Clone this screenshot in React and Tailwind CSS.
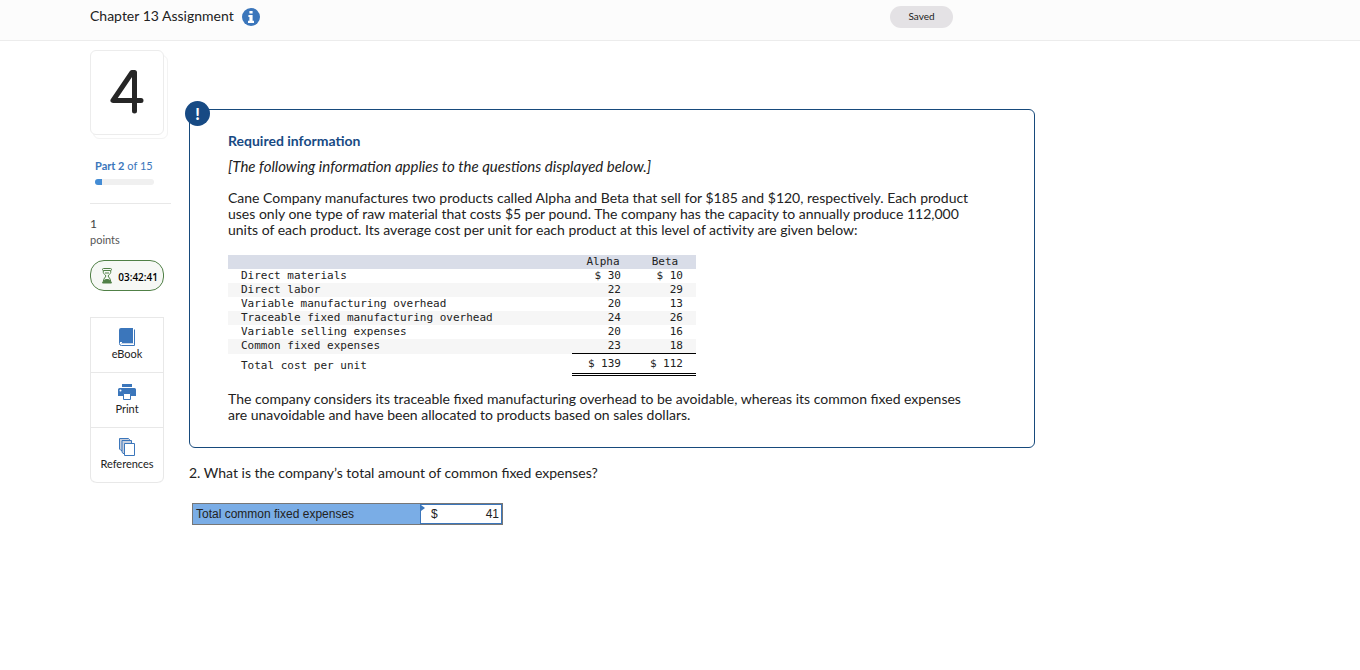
import React, { useState } from 'react';

// Average cost per unit at full capacity
const costs = [
  { label: 'Direct materials', alpha: '$ 30', beta: '$ 10' },
  { label: 'Direct labor', alpha: '22', beta: '29' },
  { label: 'Variable manufacturing overhead', alpha: '20', beta: '13' },
  { label: 'Traceable fixed manufacturing overhead', alpha: '24', beta: '26' },
  { label: 'Variable selling expenses', alpha: '20', beta: '16' },
  { label: 'Common fixed expenses', alpha: '23', beta: '18' },
];

const InfoIcon = () => (
  <svg width="18" height="18" viewBox="0 0 18 18" aria-hidden="true">
    <circle cx="9" cy="9" r="9" fill="#3b76bb" />
    <path d="M7.4 3h3.2v2.5H7.4zM6.400 7h4.200v5.800h1.400V15H6v-2.200h1.400V9h-1z" fill="#fff" />
  </svg>
);

const HourglassIcon = () => (
  <svg width="10" height="16" viewBox="0 0 10 16" fill="none" stroke="#508046" aria-hidden="true">
    <rect x=".5" y=".5" width="9" height="2" rx="1" />
    <path d="M1.300 2.500v2c0 1.700 2.500 2 2.500 3.500S1.300 10 1.300 13.500M8.700 2.500v2c0 1.700-2.500 2-2.500 3.500s2.500 2 2.500 5.500" />
    <path d="M1.300 13.500C1.900 12 3.500 11.500 5 11.500s3.100.5 3.700 2l.8 1.500h-9z" fill="#508046" />
    <path d="M3 5h4" />
  </svg>
);

const BookIcon = () => (
  <svg width="16" height="18" viewBox="0 0 16 18" fill="none" aria-hidden="true">
    <path d="M2 0h12v14H0V2a2 2 0 0 1 2-2z" fill="#3b76bb" />
    <path d="M.5 13.500v2a2 2 0 0 0 2 2h13v-16M14 14.500H3" stroke="#3b76bb" />
    <path d="M2 15.500h12.500" stroke="#c9d6e8" />
  </svg>
);

const PrintIcon = () => (
  <svg width="18" height="17" viewBox="0 0 18 17" aria-hidden="true">
    <path d="M4 0h10v3H4z" fill="#3b76bb" />
    <path d="M1.500 4h15A1.500 1.500 0 0 1 18 5.500V12H0V5.500A1.500 1.500 0 0 1 1.500 4z" fill="#3b76bb" />
    <path d="M5.500 9.500h7v6h-7z" fill="#fff" stroke="#3b76bb" />
    <circle cx="2.500" cy="6.500" r="1" fill="#fff" />
  </svg>
);

const ReferencesIcon = () => (
  <svg width="16" height="18" viewBox="0 0 16 18" stroke="#3b76bb" aria-hidden="true">
    <path d="M.5 .5h9l1 1v11H2L.5 11z" fill="#c9cfdd" />
    <path d="M3 2.500h9.500v13H4L3 14z" fill="#c9cfdd" />
    <path d="M5.500 5.500h10v12h-10z" fill="#fff" />
  </svg>
);

const tools = [
  { name: 'eBook', Icon: BookIcon },
  { name: 'Print', Icon: PrintIcon },
  { name: 'References', Icon: ReferencesIcon },
];

const Sidebar = () => (
  <aside className="w-[81px] shrink-0">
    {/* Stacked question card */}
    <div className="relative mr-[3px] h-[89px]">
      <div className="absolute right-0 bottom-0 h-[84px] w-[75px] rounded-md border border-[#f3f3f3]" />
      <div className="relative flex h-[85px] w-[74px] items-center justify-center rounded-md border border-[#ececec] bg-white">
        <svg width="34" height="46" viewBox="0 0 34 46" fill="none" stroke="#262626" strokeWidth="5" strokeLinecap="round" strokeLinejoin="round" role="img" aria-label="Question 4">
          <path d="M24.500 41V2.500H22L3 30.500h28" />
        </svg>
      </div>
    </div>

    <div className="mt-[19px] px-[5px] text-[11px] leading-4 text-[#3b76bb]">
      <strong>Part 2</strong> of 15
    </div>
    <div className="mt-[5px] ml-[5px] h-[6px] w-[59px] overflow-hidden rounded-full bg-[#f0f0f0]">
      <div className="h-full w-[7px] bg-[#438cd5]" />
    </div>

    <hr className="mt-[18px] border-[#e8e8e8]" />

    <div className="mt-3 leading-4 text-[#555]">
      <p className="text-xs leading-4 text-[#444]">1</p>
      <p className="text-[11px] leading-4">points</p>
    </div>

    <div className="mt-3 flex h-[31px] w-[74px] items-center justify-between rounded-[14px] border border-[#508046] bg-[#f6f8f5] pr-[5px] pl-[11px]">
      <HourglassIcon />
      <span className="pt-[3px] font-['Open_Sans',sans-serif] text-[10px] leading-4 font-semibold text-black">03:42:41</span>
    </div>

    <nav className="mt-[26px] w-[74px] rounded-b-md border border-b-0 border-[#e8e8e8]">
      {tools.map(({ name, Icon }) => (
        <button key={name} type="button" className="flex h-[55px] w-full flex-col items-center justify-end border-b border-[#e8e8e8] pb-[10px] text-[11px] leading-4 text-[#222] last:rounded-b-md">
          <Icon />
          {name}
        </button>
      ))}
    </nav>
  </aside>
);

const CostTable = () => (
  <table className="mt-[17px] w-[468px] table-fixed border-collapse font-['DejaVu_Sans_Mono',monospace] text-[11px] leading-[14px] text-[#222]">
    <colgroup>
      <col className="w-[344px]" />
      <col className="w-[62px]" />
      <col className="w-[62px]" />
    </colgroup>
    <thead>
      <tr className="bg-[#d9dde8]">
        <td />
        <th scope="col" className="font-normal">Alpha</th>
        <th scope="col" className="font-normal">Beta</th>
      </tr>
    </thead>
    <tbody>
      {costs.map((row) => (
        <tr key={row.label} className="even:bg-[#f6f6f6]">
          <th scope="row" className="pl-[13px] text-left font-normal">{row.label}</th>
          <td className="pr-[13px] text-right">{row.alpha}</td>
          <td className="pr-[13px] text-right">{row.beta}</td>
        </tr>
      ))}
      <tr className="h-[21px]">
        <th scope="row" className="pt-1 pl-[13px] text-left font-normal">Total cost per unit</th>
        <td className="border-t border-b-3 border-t-black border-b-black pr-[13px] text-right [border-bottom-style:double]">$ 139</td>
        <td className="border-t border-b-3 border-t-black border-b-black pr-[13px] text-right [border-bottom-style:double]">$ 112</td>
      </tr>
    </tbody>
  </table>
);

const App = () => {
  const [answer, setAnswer] = useState('41');

  return (
    <div className="min-h-screen bg-white font-['Lato',sans-serif] text-[#222]">
      <header className="flex h-[41px] items-start justify-between border-b border-[#ececec] bg-[#fcfcfc] pr-[407px] pl-[90px]">
        <div className="flex items-start gap-2 pt-2">
          <h1 className="text-sm leading-4">Chapter 13 Assignment</h1>
          <button type="button" aria-label="Assignment information">
            <InfoIcon />
          </button>
        </div>
        <button type="button" className="mt-[6px] h-[22px] w-[63px] rounded-full bg-[#e4e2e5] pb-[2px] text-[10px] leading-4">Saved</button>
      </header>

      <div className="flex gap-[18px] pt-[9px] pr-[325px] pl-[90px]">
        <Sidebar />

        <main className="min-w-0 flex-1 pt-[59px]">
          <section className="relative rounded-md border border-[#174a7c] px-[38px] pt-[23px] pb-6 text-sm leading-4">
            <span className="absolute -top-[9px] -left-[5px] flex size-[25px] items-center justify-center rounded-full bg-[#174a84] text-base font-black text-white">!</span>
            <h2 className="font-bold text-[#174a84]">Required information</h2>
            <p className="mt-[9px] text-[15px] leading-4 italic">[The following information applies to the questions displayed below.]</p>
            <p className="mt-4">
              Cane Company manufactures two products called Alpha and Beta that sell for $185 and $120, respectively. Each product
              <br />
              uses only one type of raw material that costs $5 per pound. The company has the capacity to annually produce 112,000
              <br />
              units of each product. Its average cost per unit for each product at this level of activity are given below:
            </p>
            <CostTable />
            <p className="mt-[15px]">
              The company considers its traceable fixed manufacturing overhead to be avoidable, whereas its common fixed expenses
              <br />
              are unavoidable and have been allocated to products based on sales dollars.
            </p>
          </section>

          <p className="mt-[17px] text-sm leading-4">2. What is the company’s total amount of common fixed expenses?</p>

          {/* Answer row */}
          <div className="mt-[22px] ml-[3px] flex h-[22px] w-[311px] border border-[#777] font-['Liberation_Sans',sans-serif] text-xs leading-5">
            <label htmlFor="answer" className="w-[227px] bg-[#7aade6] pl-[3px]">Total common fixed expenses</label>
            <div className="relative flex flex-1 items-center border border-[#3b76bb] pr-[2px] pl-[10px]">
              <span className="absolute top-0 left-0 border-y-3 border-l-4 border-y-transparent border-l-[#3b76bb]" />
              <span>$</span>
              <input
                id="answer"
                value={answer}
                onChange={(e) => setAnswer(e.target.value)}
                className="w-full min-w-0 text-right outline-none"
              />
            </div>
          </div>
        </main>
      </div>
    </div>
  );
};

export default App;
